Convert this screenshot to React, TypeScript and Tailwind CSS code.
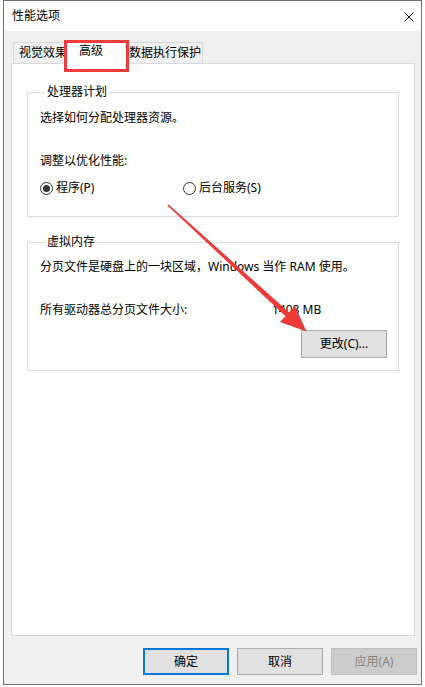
import React from "react";

const font = "font-['Noto_Sans','Noto_Sans_CJK_SC',sans-serif]";

function Radio({ checked, label, width }: { checked?: boolean; label: string; width?: string }) {
  return (
    <div className={`flex items-center gap-[3px] ${width ?? ""}`}>
      <span className="flex h-[13px] w-[13px] items-center justify-center rounded-full border border-[#333] bg-white">
        {checked && <span className="h-[7px] w-[7px] rounded-full bg-[#333]" />}
      </span>
      <span>{label}</span>
    </div>
  );
}

function Btn({ label, kind }: { label: string; kind?: "default" | "disabled" }) {
  const cls =
    kind === "default"
      ? "border-2 border-[#0078d7] bg-[#e1e1e1] text-black"
      : kind === "disabled"
      ? "border border-[#bfbfbf] bg-[#cccccc] text-[#838383]"
      : "border border-[#adadad] bg-[#e1e1e1] text-black";
  return (
    <button className={`flex h-[27px] w-[86px] items-center justify-center ${cls}`}>{label}</button>
  );
}

export default function App() {
  return (
    <div className={`relative h-[687px] w-[425px] overflow-hidden bg-white text-[12px] leading-[16px] text-black ${font}`}>
      <div className="ml-[3px] flex h-[685px] w-[419px] flex-col border border-[#707070] bg-[#f0f0f0]">
        {/* title bar */}
        <div className="flex h-[30px] items-center justify-between bg-white pl-[8px] pr-[7px]">
          <span>性能选项</span>
          <svg width="10" height="10" viewBox="0 0 10 10" className="mt-[1px]">
            <path d="M0.5 0.5L9.5 9.5M9.5 0.5L0.5 9.5" stroke="#111" strokeWidth="1" />
          </svg>
        </div>

        <div className="flex flex-1 flex-col pl-[7px]">
          {/* tabs */}
          <div className="relative z-10 -mb-px mt-[9px] flex h-[24px] items-end pl-[2px]">
            <div className="mb-px h-[21px] w-[56px] overflow-hidden whitespace-nowrap border border-b-0 border-[#d9d9d9] bg-[#f0f0f0] pl-[5px] pt-[2px]">
              视觉效果
            </div>
            <div className="relative z-10 -ml-[4px] h-[24px] w-[62px] border border-b-0 border-[#d9d9d9] bg-white pl-[13px] pt-[2px]">
              高级
            </div>
            <div className="mb-px -ml-[3px] h-[21px] w-[79px] whitespace-nowrap border border-b-0 border-[#d9d9d9] bg-[#f0f0f0] pl-[4px] pt-[2px]">
              数据执行保护
            </div>
          </div>

          {/* panel */}
          <div className="h-[573px] w-[404px] border border-[#d9d9d9] bg-white px-[15px] pt-[20px]">
            <fieldset className="border border-[#dcdcdc] pb-[20px] pl-[12px]">
              <legend className="ml-[5px] px-[2px]">处理器计划</legend>
              <div className="mt-[10px]">选择如何分配处理器资源。</div>
              <div className="mt-[27px]">调整以优化性能:</div>
              <div className="mt-[11px] flex">
                <Radio checked label="程序(P)" width="w-[143px]" />
                <Radio label="后台服务(S)" />
              </div>
            </fieldset>

            <fieldset className="mt-[17px] border border-[#dcdcdc] pb-[12px] pl-[12px] pr-[11px]">
              <legend className="ml-[5px] px-[2px]">虚拟内存</legend>
              <div className="mt-[9px]">分页文件是硬盘上的一块区域，Windows 当作 RAM 使用。</div>
              <div className="mt-[27px] flex">
                <span className="w-[232px]">所有驱动器总分页文件大小:</span>
                <span>1408 MB</span>
              </div>
              <div className="mt-[12px] flex justify-end">
                <button className="flex h-[28px] w-[86px] items-center justify-center border border-[#adadad] bg-[#e1e1e1]">
                  更改(C)...
                </button>
              </div>
            </fieldset>
          </div>

          {/* dialog buttons */}
          <div className="mt-[12px] flex justify-end gap-[8px] pr-[4px]">
            <Btn label="确定" kind="default" />
            <Btn label="取消" />
            <Btn label="应用(A)" kind="disabled" />
          </div>
        </div>
      </div>

      {/* annotation: red highlight box */}
      <div className="pointer-events-none absolute left-[64px] top-[40px] z-20 h-[32px] w-[65px] border-[3px] border-[#f23b3b]" />

      {/* annotation: red arrow */}
      <svg className="pointer-events-none absolute left-0 top-0 z-20" width="425" height="687" viewBox="0 0 425 687">
        <polygon
          points="167.4,205.6 168.6,204.4 289.5,312.7 285.5,316.2"
          fill="#ee3a36"
        />
        <polygon points="280,322 306.5,331.5 295,306" fill="#ee3a36" />
      </svg>
    </div>
  );
}
